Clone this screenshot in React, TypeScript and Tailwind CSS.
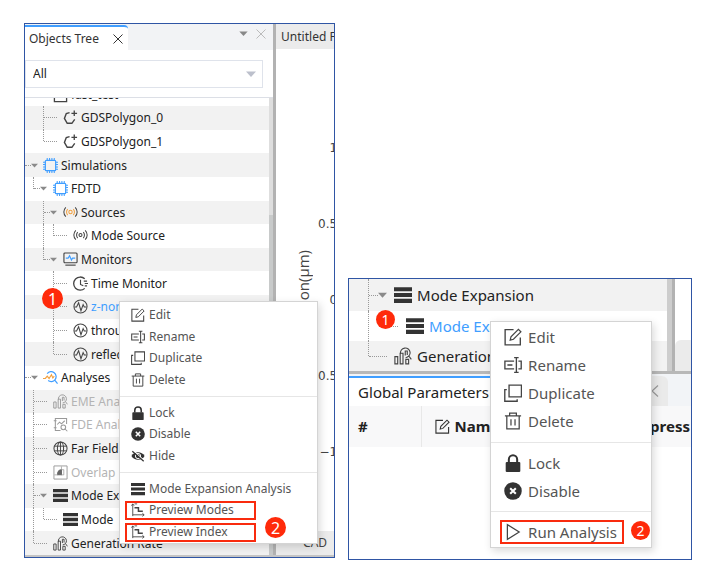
import React from "react";

type IconProps = { className?: string };
type IconType = (props: IconProps) => React.ReactElement;

function Svg({ className = "", children }: { className?: string; children: React.ReactNode }) {
  return (
    <svg
      viewBox="0 0 16 16"
      className={"shrink-0 " + className}
      fill="none"
      stroke="currentColor"
      strokeWidth="1.1"
      aria-hidden="true"
    >
      {children}
    </svg>
  );
}

const PolygonIcon: IconType = (p) => (
  <Svg {...p}>
    <path d="M7 2.800 3.500 3.800 1.500 9l3 5.200h5l3-4.200" strokeWidth="1.500" />
    <path d="M12 .5v6M9 3.500h6" strokeWidth="1.400" />
  </Svg>
);

const ChipIcon: IconType = (p) => (
  <Svg {...p}>
    <g stroke="#409eff">
      <rect x="2.500" y="2.500" width="11" height="11" rx="1" strokeWidth="1.300" />
      <path d="M4.500 0v2.500M7 0v2.500M9.500 0v2.500M12 0v2.500M4.500 13.500V16M7 13.500V16M9.500 13.500V16M12 13.500V16M0 4.500h2.500M0 7h2.500M0 9.500h2.500M0 12h2.500M13.500 4.500H16M13.500 7H16M13.500 9.500H16M13.500 12H16" />
    </g>
  </Svg>
);

const outerWaves = <path d="M3 2.500C.2 5.200.2 9.800 3 12.500M13 2.500c2.800 2.700 2.800 7.300 0 10" />;

const SourcesIcon: IconType = (p) => (
  <Svg {...p}>
    {outerWaves}
    <g stroke="#f0a040">
      <circle cx="8" cy="7.500" r="1.800" />
      <path d="M5 4.300c-1.600 1.700-1.600 4.700 0 6.400M11 4.300c1.600 1.700 1.600 4.700 0 6.400" />
    </g>
  </Svg>
);

const ModeSourceIcon: IconType = (p) => (
  <Svg {...p}>
    {outerWaves}
    <circle cx="8" cy="7.500" r="1.600" />
    <path d="M5 4.300c-1.600 1.700-1.600 4.700 0 6.400M11 4.300c1.600 1.700 1.600 4.700 0 6.400" />
  </Svg>
);

const MonitorIcon: IconType = (p) => (
  <Svg {...p}>
    <rect x="1" y="1" width="14" height="10.500" rx="1" strokeWidth="1.200" />
    <path d="M2.500 14h11" strokeWidth="1.200" />
    <path d="M3 6.500h2.500L7 4l2 4.500 1.200-2H13" stroke="#409eff" strokeWidth="1.200" />
  </Svg>
);

const ClockIcon: IconType = (p) => (
  <Svg {...p}>
    <path d="M12.500 3A7 7 0 1 0 12.500 13.200" strokeWidth="1.400" />
    <path d="M8 4v5l3 1.500M11.500 5.500H15M12.500 8H16M12.500 10.500H15" strokeWidth="1.200" />
  </Svg>
);

const PulseIcon: IconType = (p) => (
  <Svg {...p}>
    <circle cx="8" cy="8" r="7" />
    <path d="M1.500 8.500h2.300L6 4l2.500 8.500L10.800 6l1.200 2.500h2.500" />
  </Svg>
);

const AnalysesIcon: IconType = (p) => (
  <Svg {...p}>
    <path d="M4.500 3.800a5.300 5.300 0 1 1 1 7.500M12.500 10.800l3 3.700" stroke="#409eff" strokeWidth="1.300" />
    <path d="M0 9h2.500l2-2.500 2 2.500L9 5l1.500 3.500L12 6.500" stroke="#f0a040" strokeWidth="1.200" />
  </Svg>
);

const BarsLensIcon: IconType = (p) => (
  <Svg {...p}>
    <path d="M.8 8.500h2.500V15H.8zM5.500 5.500H8V15H5.500zM10.500 11H13v4h-2.500z" strokeWidth="1" />
    <path d="M5.800 6a4.300 4.300 0 1 1 4.500 3.500M13.200 8l2.200 3M10 7.500V3.500h1.800V7" strokeWidth="1" />
  </Svg>
);

const ChartLensIcon: IconType = (p) => (
  <Svg {...p}>
    <path d="M14.500 7.500V1.500h-12v13H8M.8 4h3M.8 11.500h3" />
    <path d="M4.500 8l2.500-2.500 2 1.800 3.500-3.300" />
    <circle cx="11" cy="11" r="2.500" />
    <path d="M12.800 12.800l2.500 2.400" />
  </Svg>
);

const GlobeIcon: IconType = (p) => (
  <Svg {...p}>
    <circle cx="8" cy="8" r="7" />
    <ellipse cx="8" cy="8" rx="3.300" ry="7" />
    <path d="M8 1v14M1.500 5.500h13M1.500 10.500h13" strokeWidth="1" />
  </Svg>
);

const OverlapIcon: IconType = (p) => (
  <Svg {...p}>
    <path d="M1 1h14v14H1z" strokeWidth="1" />
    <path d="M5 10.500V8.500C5.500 6.500 7 5.200 9 5v5.500z" fill="#666" stroke="#666" />
    <path d="M9 1.500V5M1.500 10.500H5M9 10.500h2.500V5H9" strokeWidth=".8" />
  </Svg>
);

const LayersIcon: IconType = (p) => (
  <Svg {...p}>
    <path d="M0 2.800h16M0 8h16M0 13.200h16" stroke="#333" strokeWidth="3.600" />
  </Svg>
);

const FolderIcon: IconType = (p) => (
  <Svg {...p}>
    <path d="M1.500 2h5l1.500 2h6.500v10.500h-13z" strokeWidth="1.400" />
  </Svg>
);

const EditIcon: IconType = (p) => (
  <Svg {...p}>
    <path d="M8.500 1.500H1v13.500h13.500V8.500" strokeWidth="1.200" />
    <path d="M5.500 10.800l.7-3L12.800 1.200l2.200 2.200-6.600 6.600z" />
  </Svg>
);

const RenameIcon: IconType = (p) => (
  <Svg {...p}>
    <path d="M9 4.500H.8v7H9M12.800 4.500h2.500v7h-2.500M11 1.500v13M9 1.500h4M9 14.500h4M3 8h4.500" strokeWidth="1.200" />
  </Svg>
);

const DuplicateIcon: IconType = (p) => (
  <Svg {...p}>
    <path d="M4.500 1h11v10.500h-11z" strokeWidth="1.200" />
    <path d="M2.500 5H.7v10.300h11V13.500" strokeWidth="1.200" />
  </Svg>
);

const TrashIcon: IconType = (p) => (
  <Svg {...p}>
    <path d="M.8 3.500h14.400M5 3.500V1h6v2.500M2.500 3.500V15h11V3.500M6.200 6.500v5.500M9.800 6.500v5.500" strokeWidth="1.100" />
  </Svg>
);

const LockIcon: IconType = (p) => (
  <Svg {...p}>
    <rect x="1.500" y="7" width="13" height="9" rx="1" fill="#333" stroke="none" />
    <path d="M4.300 7.500V4.800a3.700 3.700 0 0 1 7.400 0v2.700" stroke="#333" strokeWidth="1.800" />
  </Svg>
);

const DisableIcon: IconType = (p) => (
  <Svg {...p}>
    <circle cx="8" cy="8" r="7.800" fill="#333" stroke="none" />
    <path d="M5.500 5.500l5 5M10.500 5.500l-5 5" stroke="#fff" strokeWidth="1.800" />
  </Svg>
);

const HideIcon: IconType = (p) => (
  <Svg {...p}>
    <path d="M.5 8C3.500 2.300 12.500 2.300 15.500 8 12.500 13.700 3.500 13.700.5 8z" fill="#333" stroke="none" />
    <circle cx="8" cy="8" r="3" stroke="#fff" />
    <path d="M2.500 1.500l13 12" stroke="#fff" strokeWidth="1.200" />
    <path d="M1.500 2.500l13 11.500" stroke="#333" strokeWidth="1.400" />
  </Svg>
);

const PreviewIcon: IconType = (p) => (
  <Svg {...p}>
    <path d="M2 15V1M.5 3L2 1l1.500 2M2 13.500h13M13 11.700l2 1.800-2 1.800M4 1h3" strokeWidth="1" />
    <path d="M4 5.500h4.500v4h5" strokeWidth="1.700" />
  </Svg>
);

const PlayIcon: IconType = (p) => (
  <Svg {...p}>
    <path d="M3 1.500v13L13.500 8z" strokeWidth="1.100" />
  </Svg>
);

function CloseMark({ className = "" }: IconProps) {
  return (
    <svg viewBox="0 0 10 10" className={"size-[10px] " + className} stroke="currentColor" fill="none" aria-hidden="true">
      <path d="M.5.5l9 9M9.500.5l-9 9" />
    </svg>
  );
}

function Caret({ className = "" }: IconProps) {
  return (
    <svg viewBox="0 0 10 6" className={"shrink-0 " + className} fill="currentColor" aria-hidden="true">
      <path d="M0 .5h10L5 6z" />
    </svg>
  );
}

type Node = {
  label: string;
  icon: IconType;
  level: number;
  open?: boolean;
  last?: boolean;
  through?: boolean[];
  tone?: "active" | "muted";
};

const objects: Node[] = [
  { label: "GDSPolygon_0", icon: PolygonIcon, level: 2 },
  { label: "GDSPolygon_1", icon: PolygonIcon, level: 2, last: true },
  { label: "Simulations", icon: ChipIcon, level: 0, open: true },
  { label: "FDTD", icon: ChipIcon, level: 1, open: true, last: true },
  { label: "Sources", icon: SourcesIcon, level: 2, open: true },
  { label: "Mode Source", icon: ModeSourceIcon, level: 3, last: true, through: [false, true] },
  { label: "Monitors", icon: MonitorIcon, level: 2, open: true, last: true },
  { label: "Time Monitor", icon: ClockIcon, level: 3 },
  { label: "z-normal", icon: PulseIcon, level: 3, tone: "active" },
  { label: "through", icon: PulseIcon, level: 3 },
  { label: "reflection", icon: PulseIcon, level: 3, last: true },
  { label: "Analyses", icon: AnalysesIcon, level: 0, open: true },
  { label: "EME Analysis", icon: BarsLensIcon, level: 1, tone: "muted" },
  { label: "FDE Analysis", icon: ChartLensIcon, level: 1, tone: "muted" },
  { label: "Far Field", icon: GlobeIcon, level: 1 },
  { label: "Overlap", icon: OverlapIcon, level: 1, tone: "muted" },
  { label: "Mode Expansion", icon: LayersIcon, level: 1, open: true },
  { label: "Mode", icon: LayersIcon, level: 2, last: true, through: [true] },
  { label: "Generation Rate", icon: BarsLensIcon, level: 1, last: true },
];

function toneClass(tone?: "active" | "muted") {
  if (tone === "active") return "text-[#409eff]";
  if (tone === "muted") return "text-[#b4b4b4]";
  return "text-[#222]";
}

function iconTone(tone?: "active" | "muted") {
  return tone === "muted" ? "text-[#999]" : "text-[#444]";
}

function TreeRow({ node }: { node: Node }) {
  const Icon = node.icon;
  const guides = Array.from({ length: Math.max(node.level - 1, 0) }, (_, i) => Boolean(node.through?.[i]));
  return (
    <li className={"flex min-h-0 flex-1 items-center odd:bg-[#f2f2f2] " + (node.level > 0 ? "pl-2" : "")}>
      {guides.map((line, i) => (
        <span key={i} className={"w-[10px] self-stretch " + (line ? "border-l border-dotted border-[#999]" : "")} />
      ))}
      <span className={"flex shrink-0 items-center self-stretch " + (node.level > 0 ? "w-5" : "w-[18px]")}>
        {node.level > 0 && (
          <span
            className={"w-0 self-start border-l border-dotted border-[#999] " + (node.last ? "h-1/2" : "h-full")}
          />
        )}
        <span className={"border-t border-dotted border-[#999] " + (node.open ? "w-[6px]" : "w-[13px]")} />
        {node.open && (
          <button type="button" aria-label={"Collapse " + node.label} className="text-[#8a8a8a]">
            <Caret className="h-[5px] w-[7px]" />
          </button>
        )}
      </span>
      <Icon className={"mr-[3px] size-[15px] " + iconTone(node.tone)} />
      <span className={"whitespace-nowrap pt-px leading-5 " + toneClass(node.tone)}>{node.label}</span>
    </li>
  );
}

function Badge({ n, className }: { n: number; className: string }) {
  return (
    <span
      className={"absolute flex items-center justify-center rounded-full bg-[#ff2a0a] leading-5 text-white " + className}
    >
      {n}
    </span>
  );
}

type Entry = { label: string; icon: IconType; marked?: boolean } | null;

const objectMenu: Entry[] = [
  { label: "Edit", icon: EditIcon },
  { label: "Rename", icon: RenameIcon },
  { label: "Duplicate", icon: DuplicateIcon },
  { label: "Delete", icon: TrashIcon },
  null,
  { label: "Lock", icon: LockIcon },
  { label: "Disable", icon: DisableIcon },
  { label: "Hide", icon: HideIcon },
  null,
  { label: "Mode Expansion Analysis", icon: LayersIcon },
  { label: "Preview Modes", icon: PreviewIcon, marked: true },
  { label: "Preview Index", icon: PreviewIcon, marked: true },
];

const expansionMenu: Entry[] = [
  { label: "Edit", icon: EditIcon },
  { label: "Rename", icon: RenameIcon },
  { label: "Duplicate", icon: DuplicateIcon },
  { label: "Delete", icon: TrashIcon },
  null,
  { label: "Lock", icon: LockIcon },
  { label: "Disable", icon: DisableIcon },
  null,
  { label: "Run Analysis", icon: PlayIcon, marked: true },
];

function ContextMenu({ entries, large, className }: { entries: Entry[]; large?: boolean; className: string }) {
  return (
    <div
      role="menu"
      className={
        "absolute flex flex-col border border-[#d4d4d4] bg-white text-[#555] shadow-[2px_3px_8px_rgba(0,0,0,0.15)] " +
        (large ? "py-px text-[15px] " : "pt-0.5 text-xs ") +
        className
      }
    >
      {entries.map((e, i) =>
        e === null ? (
          <hr key={i} className={"border-[#e6e6e6] " + (large ? "my-[6px]" : "my-[5px]")} />
        ) : (
          <div key={i} className={"flex min-h-0 flex-1 items-center " + (large ? "pl-[9px]" : "pl-[5px]")}>
            <button
              type="button"
              role="menuitem"
              className={
                "flex items-center whitespace-nowrap border-2 " +
                (e.marked ? "border-[#f92b0e] " : "border-transparent ") +
                (large
                  ? "h-6 w-[124px] gap-[6px] pl-[2px] leading-5"
                  : "h-[19px] w-[131px] gap-1 pl-[4px] leading-4")
              }
            >
              <e.icon className={"text-[#444] " + (large ? "size-[18px]" : "size-[14px]")} />
              {e.label}
            </button>
          </div>
        ),
      )}
    </div>
  );
}

const ticks = ["1", "0.5", "0", "−0.5", "−1"];

function ObjectsWindow() {
  return (
    <section className="relative flex flex-[311_1_0%] flex-col border border-[#2f55a4] bg-white text-xs">
      <div className="flex border-b-2 border-[#c4c4c4]">
        <div className="flex min-w-0 flex-1 flex-col">
          <header className="flex h-[26px] items-stretch bg-[#f2f3f5] pt-px">
            <div className="flex w-[103px] items-center justify-between rounded-tr border-t-2 border-[#409eff] bg-white pl-1 pr-[5px] text-[#333]">
              <span className="whitespace-nowrap">Objects Tree</span>
              <button type="button" aria-label="Close Objects Tree">
                <CloseMark />
              </button>
            </div>
            <div className="mb-2 ml-auto flex items-center gap-2 pr-[7px]">
              <button type="button" aria-label="Panel options" className="text-[#888]">
                <Caret className="h-[5px] w-[9px]" />
              </button>
              <button type="button" aria-label="Close panel" className="text-[#bbb]">
                <CloseMark />
              </button>
            </div>
          </header>
          <div className="border-b border-[#dcdfe6] py-[9px] pt-[10px] pr-[10px]">
            <div className="relative">
              <select
                aria-label="Object filter"
                className="h-7 w-full appearance-none border border-[#dfe3eb] bg-white pl-[7px] text-[#222]"
              >
                <option>All</option>
              </select>
              <Caret className="pointer-events-none absolute right-[7px] top-[11px] h-[6px] w-[10px] text-[#bcc0cc]" />
            </div>
          </div>
          <div className="flex">
            <div className="min-w-0 flex-1">
              <div className="flex h-2 items-end overflow-hidden pl-7">
                <div className="flex h-[22px] items-center gap-[3px] text-[#222]">
                  <FolderIcon className="size-[15px] text-[#444]" />
                  fast_test
                </div>
              </div>
              <ul className="flex h-[449px] flex-col">
                {objects.map((o, i) => (
                  <TreeRow key={i} node={o} />
                ))}
              </ul>
            </div>
            <div className="w-1 bg-[#dedede] pt-[117px]">
              <div className="h-full bg-[#c8caca]" />
            </div>
          </div>
        </div>
        <div className="w-[3px] bg-[#b2b2b2]" />
        <div className="flex w-[58px] flex-col overflow-hidden">
          <div className="flex h-[25px] items-center whitespace-nowrap bg-[#ebebeb] pl-[5px] text-[#333]">Untitled F</div>
          <div className="flex flex-1 pt-[61px]">
            <div className="flex w-10 shrink-0 rotate-180 items-center justify-center self-start pb-[140px] pr-[14px] font-['Open_Sans',sans-serif] text-[15px] leading-5 text-[#444] [writing-mode:vertical-rl]">
              on(μm)
            </div>
            <div className="-mr-[3px] flex min-w-0 flex-1 flex-col font-['DejaVu_Sans',sans-serif] text-xs text-[#444]">
              {ticks.map((t) => (
                <div key={t} className="flex h-[76px] items-center justify-end whitespace-nowrap">
                  {t}
                </div>
              ))}
            </div>
          </div>
          <div className="flex h-6 items-center bg-[#ebebeb] pl-[27px] text-[#444]">CAD</div>
        </div>
      </div>
      <ContextMenu entries={objectMenu} className="left-[94px] top-[277px] h-[243px] w-[199px]" />
      <Badge n={1} className="left-[17px] top-[264px] size-[21px] text-base" />
      <Badge n={2} className="left-[240px] top-[493px] size-[21px] text-base" />
    </section>
  );
}

function ExpansionWindow() {
  return (
    <section className="relative mt-[255px] flex flex-[344_1_0%] flex-col border border-[#2f55a4] bg-white text-[15px]">
      <div className="flex border-b-[3px] border-[#b8b8b8]">
        <ul className="flex min-w-0 flex-1 flex-col text-[#222]">
          <li className="flex h-8 items-center bg-[#f2f2f2] pl-[19px]">
            <span className="h-full border-l border-dotted border-[#999]" />
            <span className="w-[9px] border-t border-dotted border-[#999]" />
            <button type="button" aria-label="Collapse Mode Expansion" className="mr-[7px] text-[#8a8a8a]">
              <Caret className="h-[6px] w-[9px]" />
            </button>
            <LayersIcon className="mr-[5px] size-[18px]" />
            Mode Expansion
          </li>
          <li className="flex h-[30px] items-center whitespace-nowrap pl-[19px]">
            <span className="h-full w-[13px] border-l border-dotted border-[#999]" />
            <span className="h-1/2 self-start border-l border-dotted border-[#999]" />
            <span className="mr-[8px] w-4 border-t border-dotted border-[#999]" />
            <LayersIcon className="mr-[5px] size-[18px]" />
            <span className="text-[#409eff]">Mode Expansion</span>
          </li>
          <li className="flex h-[30px] items-center whitespace-nowrap bg-[#f2f2f2] pl-[19px]">
            <span className="h-1/2 self-start border-l border-dotted border-[#999]" />
            <span className="mr-[7px] w-[18px] border-t border-dotted border-[#999]" />
            <BarsLensIcon className="mr-[5px] size-[18px] text-[#444]" />
            Generation Rate
          </li>
        </ul>
        <div className="w-[5px] bg-[#cdcdcd]" />
        <div className="w-[3px] bg-[#b2b2b2]" />
        <div className="flex w-4 flex-col justify-end">
          <div className="h-[31px] rounded-tl-md bg-[#ebebeb]" />
        </div>
      </div>
      <div className="flex h-[32px] bg-[#f2f4f7] pt-[2px]">
        <div className="flex w-[301px] items-center border-t-2 border-[#409eff] bg-white pl-[9px] text-[#222]">
          Global Parameters
        </div>
        <button
          type="button"
          aria-label="Previous tab"
          className="flex w-[18px] items-center justify-center rounded-tr-md bg-[#eaeaea] pr-2 text-[#999]"
        >
          <svg viewBox="0 0 8 12" className="h-3 w-2 shrink-0" fill="none" stroke="currentColor" strokeWidth="1.200">
            <path d="M7 .5 1 6l6 5.500" />
          </svg>
        </button>
      </div>
      <table className="w-full table-fixed border-collapse bg-[#f8f8f9] text-left text-[#222]">
        <thead>
          <tr className="h-[41px]">
            <th className="w-[72px] border-r border-[#e8e8e8] pl-[9px]">#</th>
            <th className="pl-[13px]">
              <span className="flex items-center gap-[5px]">
                <EditIcon className="size-[15px] text-[#333]" />
                Name
              </span>
            </th>
            <th className="w-[58px] overflow-hidden">
              <span className="block whitespace-nowrap">Express</span>
            </th>
          </tr>
        </thead>
      </table>
      <div className="h-28" />
      <ContextMenu large entries={expansionMenu} className="left-[141px] top-[42px] h-[227px] w-[162px]" />
      <Badge n={1} className="left-[27px] top-[31px] size-[19px] text-sm" />
      <Badge n={2} className="left-[282px] top-[242px] size-[19px] text-sm" />
    </section>
  );
}

export default function App() {
  return (
    <main className="flex items-start gap-[13px] bg-white pb-[6px] pl-6 pr-[21px] pt-[23px] font-['Noto_Sans',sans-serif]">
      <ObjectsWindow />
      <ExpansionWindow />
    </main>
  );
}
